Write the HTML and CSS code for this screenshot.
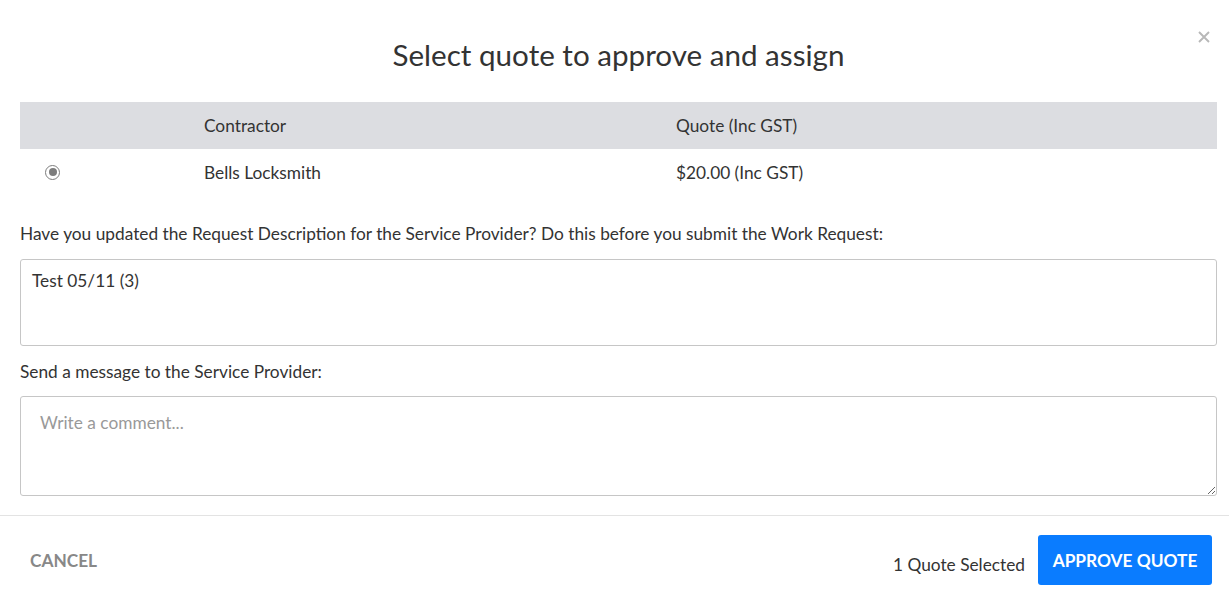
FILE: index.html
```html
<!DOCTYPE html>
<html lang="en">
<head>
<meta charset="utf-8">
<title>Select quote to approve and assign</title>
<link rel="stylesheet" href="styles.css">
</head>
<body>
<div class="modal">
  <button class="close" aria-label="Close">
    <svg width="12" height="12" viewBox="0 0 12 12"><path d="M1 1L11 11M11 1L1 11" stroke="#b8b8b8" stroke-width="1.9" fill="none"/></svg>
  </button>
  <div class="modal-body">
    <h1 class="title">Select quote to approve and assign</h1>
    <div class="table">
      <div class="row head">
        <div class="cell"></div>
        <div class="cell">Contractor</div>
        <div class="cell">Quote (Inc GST)</div>
      </div>
      <div class="row">
        <div class="cell"><span class="radio"><span class="dot"></span></span></div>
        <div class="cell">Bells Locksmith</div>
        <div class="cell">$20.00 (Inc GST)</div>
      </div>
    </div>
    <label class="label first">Have you updated the Request Description for the Service Provider? Do this before you submit the Work Request:</label>
    <div class="box desc">Test 05/11 (3)</div>
    <label class="label second">Send a message to the Service Provider:</label>
    <textarea class="box comment" placeholder="Write a comment..."></textarea>
  </div>
  <div class="footer">
    <button class="cancel">CANCEL</button>
    <div class="right">
      <span class="selected">1 Quote Selected</span>
      <button class="approve">APPROVE QUOTE</button>
    </div>
  </div>
</div>
</body>
</html>
```
FILE: styles.css
```css
* { box-sizing: border-box; }
html, body { margin: 0; padding: 0; background: #fff; }
body {
  font-family: Lato, "Open Sans", sans-serif;
  color: #333;
  font-size: 17.3px;
}
.modal {
  position: relative;
  width: 1229px;
  height: 597px;
}
.close {
  position: absolute;
  top: 31px;
  right: 19px;
  width: 12px;
  height: 12px;
  padding: 0;
  border: 0;
  background: none;
  display: flex;
}
.modal-body {
  padding: 34px 12px 0 20px;
}
.title {
  margin: 0 0 27px;
  text-align: center;
  font-weight: 400;
  font-size: 29.6px;
  line-height: 41px;
  color: #333;
}
.table { display: flex; flex-direction: column; }
.row {
  display: grid;
  grid-template-columns: 184px 472px 1fr;
  height: 46px;
  align-items: center;
}
.row.head { background: #dcdde1; height: 47px; }
.radio {
  display: inline-flex;
  align-items: center;
  justify-content: center;
  margin-left: 25px;
  margin-bottom: 3px;
  width: 15px;
  height: 15px;
  border: 1.6px solid #7d7d7d;
  border-radius: 50%;
  background: #fff;
  vertical-align: middle;
}
.dot {
  width: 8px;
  height: 8px;
  border-radius: 50%;
  background: #7d7d7d;
}
.label {
  display: block;
  line-height: 24px;
  color: #333;
}
.label.first { margin: 27px 0 13px; }
.label.second { margin: 14px 0 12px; }
.box {
  display: block;
  width: 100%;
  border: 1px solid #c6c6c6;
  border-radius: 3px;
  font-family: inherit;
  font-size: 17.3px;
  color: #333;
}
.desc {
  height: 87px;
  padding: 10px 11px;
  line-height: 22px;
}
.comment {
  height: 100px;
  padding: 15px 19px;
  line-height: 22px;
  resize: vertical;
  outline: none;
}
.comment::placeholder { color: #999; }
.footer {
  position: absolute;
  left: 0;
  right: 0;
  top: 515px;
  height: 82px;
  border-top: 1px solid #e3e3e3;
  display: flex;
  align-items: flex-start;
  justify-content: space-between;
  padding: 19px 17px 0 30px;
}
.cancel {
  margin-top: 15px;
  border: 0;
  padding: 0;
  background: none;
  font-family: inherit;
  font-weight: 700;
  font-size: 17.3px;
  color: #888;
  line-height: 22px;
}
.right { display: flex; align-items: flex-start; gap: 13px; }
.selected {
  margin-top: 19px;
  line-height: 22px;
  color: #333;
}
.approve {
  width: 174px;
  height: 50px;
  border: 0;
  border-radius: 3px;
  background: #0a7cff;
  color: #fff;
  font-family: inherit;
  font-weight: 700;
  font-size: 17.3px;
  padding: 0;
}
```
